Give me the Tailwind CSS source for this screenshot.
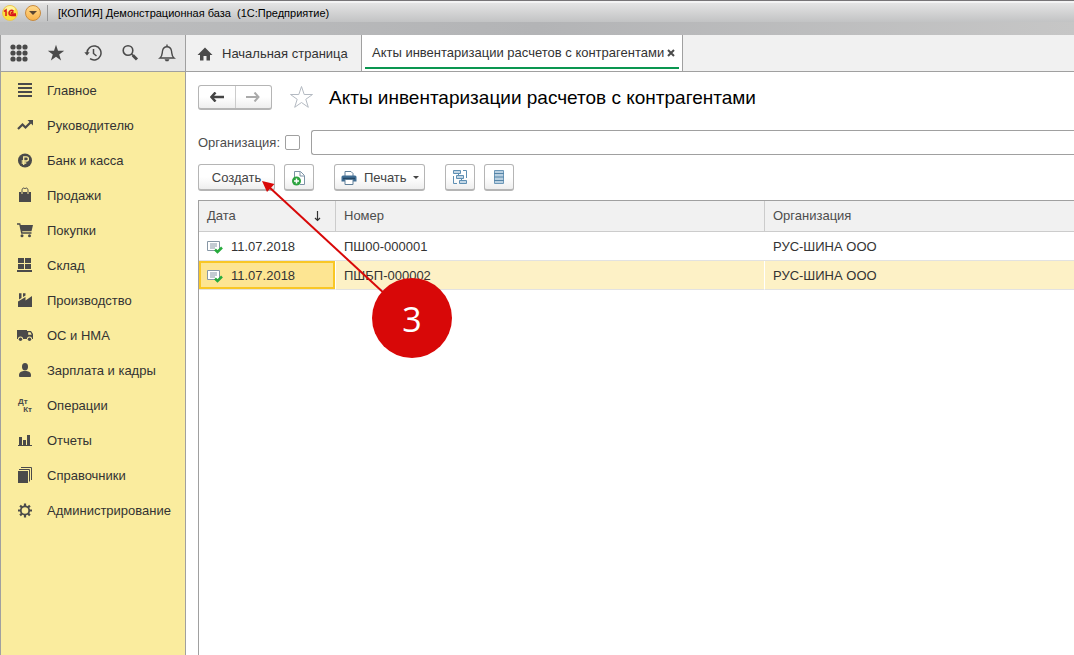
<!DOCTYPE html>
<html lang="ru">
<head>
<meta charset="utf-8">
<meta name="viewport" content="width=device-width, initial-scale=1">
<title>Акты инвентаризации расчетов с контрагентами</title>
<script src="https://cdn.jsdelivr.net/npm/@tailwindcss/browser@4"></script>
</head>
<body class="relative flex min-h-screen flex-col overflow-x-hidden bg-white font-['Liberation_Sans',Arial,sans-serif] text-[13px] leading-4 text-[#333333]">

<!-- Window title bar -->
<header class="flex h-[35px] flex-col border-t border-[#777577] bg-linear-to-r from-[#bdbebf] via-[#b3b4b6] to-[#c6c6c6]">
  <div class="flex h-[21px] items-center border-t-2 border-[#f4f4f4] bg-linear-to-b from-[#e4e4e4] to-[#c2c3c4] pl-[2px]">
    <svg class="size-4 overflow-visible" viewBox="0 0 16 16" aria-label="1С">
      <circle cx="8" cy="8" r="7.5" fill="#fde23c" stroke="#e9c65a"/>
      <ellipse cx="8" cy="4" rx="5" ry="3" fill="#fff3a0"/>
      <path d="M2 6.5 4 5V11M11.5 6.2C10 4.600 7 5.200 7 8C7 10 8.500 10.500 10 10.500H14M11.500 7.500C10.500 6.800 9.200 7.300 9.200 8.300 9.200 8.900 9.700 9 10.300 9H14" fill="none" stroke="#d8171b" stroke-width="1.500"/>
    </svg>
    <button type="button" aria-label="Меню" class="ml-[7px] flex size-4 items-center justify-center rounded-full border border-[#c98a3c] bg-linear-to-b from-[#ffd98a] to-[#f9b248]">
      <svg class="h-1 w-2" viewBox="0 0 8 4"><path d="M0 0H8L4 4Z" fill="#5a4632"/></svg>
    </button>
    <span class="ml-[6px] h-4 w-px bg-[#969798]"></span>
    <span class="ml-[10px] whitespace-pre text-[11px] text-black">[КОПИЯ] Демонстрационная база  (1С:Предприятие)</span>
  </div>
</header>

<div class="flex flex-1 border-l border-[#a0a0a0]">
  <!-- Section panel -->
  <aside class="flex w-[185px] shrink-0 flex-col border-r border-[#a0a0a0] bg-[#faec9e]">
    <div class="grid h-[37px] grid-cols-5 border-b border-[#a0a0a0] bg-[#e6e6e6] text-[#4a4a4a]">
      <button type="button" aria-label="Разделы" class="flex items-center justify-center">
        <svg class="size-[18px]" viewBox="0 0 18 18" fill="currentColor"><circle cx="3" cy="3" r="2.600"/><circle cx="9" cy="3" r="2.600"/><circle cx="15" cy="3" r="2.600"/><circle cx="3" cy="9" r="2.600"/><circle cx="9" cy="9" r="2.600"/><circle cx="15" cy="9" r="2.600"/><circle cx="3" cy="15" r="2.600"/><circle cx="9" cy="15" r="2.600"/><circle cx="15" cy="15" r="2.600"/></svg>
      </button>
      <button type="button" aria-label="Избранное" class="flex items-center justify-center">
        <svg class="size-[18px]" viewBox="0 0 18 18" fill="currentColor"><path d="M9 .8 11 6.700H17.200L12.200 10.400 14.100 16.500 9 12.800 3.900 16.500 5.800 10.400.8 6.700H7Z"/></svg>
      </button>
      <button type="button" aria-label="История" class="flex items-center justify-center">
        <svg class="size-[18px]" viewBox="0 0 18 18" fill="none" stroke="currentColor" stroke-width="1.500"><path d="M3 9A7 7 0 1 1 6 14.700"/><path d="M9.500 5V9.500L12.500 12"/><path d="M.3 8.300H5.700L3 11.500Z" fill="currentColor" stroke="none"/></svg>
      </button>
      <button type="button" aria-label="Поиск" class="flex items-center justify-center">
        <svg class="size-[18px]" viewBox="0 0 18 18" fill="none" stroke="currentColor"><circle cx="7" cy="6.500" r="4.800" stroke-width="1.600"/><path d="M10.500 10 12 11.500" stroke-width="1.600"/><path d="M11.800 11.300 16 15.500" stroke-width="3"/></svg>
      </button>
      <button type="button" aria-label="Уведомления" class="flex items-center justify-center">
        <svg class="size-[18px]" viewBox="0 0 18 18" fill="none" stroke="currentColor" stroke-width="1.400"><path d="M2 14C4.500 12 4 10 4.500 7 5 3.800 6.500 2.700 9 2.700S13 3.800 13.500 7C14 10 13.500 12 16 14Z"/><path d="M9 .5V2.700"/><path d="M6.500 15.300H11.500L10.300 17.300H7.700Z" fill="currentColor" stroke="none"/></svg>
      </button>
    </div>
    <nav aria-label="Разделы" class="flex flex-col pt-px text-[#333333]">
      <a href="#" class="flex h-[35px] items-center gap-[13px] pl-[15px]"><svg class="size-[18px] text-[#4a4a4a]" viewBox="0 0 18 18" fill="currentColor"><path d="M2 1H16V3H2ZM2 5H16V7H2ZM2 9H16V11H2ZM2 13H16V15H2Z"/></svg>Главное</a>
      <a href="#" class="flex h-[35px] items-center gap-[13px] pl-[15px]"><svg class="size-[18px] text-[#4a4a4a]" viewBox="0 0 18 18" fill="currentColor"><path d="M2 12 6.500 7.500 9.500 10.500 14.500 5.500" fill="none" stroke="currentColor" stroke-width="2.200"/><path d="M11.500 3H17V8.500Z"/></svg>Руководителю</a>
      <a href="#" class="flex h-[35px] items-center gap-[13px] pl-[15px]"><svg class="size-[18px] text-[#4a4a4a]" viewBox="0 0 18 18" fill="currentColor"><circle cx="9" cy="8.500" r="7"/><path d="M7.700 13V4.800H10.300A2.100 2.100 0 0 1 10.300 9H5.700M5.700 11H10.300" fill="none" stroke="#faec9e" stroke-width="1.300"/></svg>Банк и касса</a>
      <a href="#" class="flex h-[35px] items-center gap-[13px] pl-[15px]"><svg class="size-[18px] text-[#4a4a4a]" viewBox="0 0 18 18" fill="currentColor"><path d="M3 5H15V15H3Z"/><path d="M6 7V3.500C6 .3 8.500 .5 9 2 9.500 .5 12 .3 12 3.500V7" fill="none" stroke="#faec9e" stroke-width="2"/><path d="M6 7V3.500C6 .5 8.500 .5 9 2 9.500 .5 12 .5 12 3.500V7" fill="none" stroke="currentColor" stroke-width="1"/></svg>Продажи</a>
      <a href="#" class="flex h-[35px] items-center gap-[13px] pl-[15px]"><svg class="size-[18px] text-[#4a4a4a]" viewBox="0 0 18 18" fill="currentColor"><path d="M1 1.300H4.300L4.700 3H17L15.500 9.300H6.200L6.400 10.300H15.500V11.700H5.200L3.300 2.700H1Z"/><circle cx="6" cy="13.700" r="1.500"/><circle cx="13.500" cy="13.700" r="1.500"/></svg>Покупки</a>
      <a href="#" class="flex h-[35px] items-center gap-[13px] pl-[15px]"><svg class="size-[18px] text-[#4a4a4a]" viewBox="0 0 18 18" fill="currentColor"><path d="M2 1H8V6H2ZM9 1H15V6H9ZM2 7H8V12H2ZM9 7H15V12H9ZM1 13H16V15H1Z"/></svg>Склад</a>
      <a href="#" class="flex h-[35px] items-center gap-[13px] pl-[15px]"><svg class="size-[18px] text-[#4a4a4a]" viewBox="0 0 18 18" fill="currentColor"><path d="M2 15V9.500L9.500 5V8.500L16 4V15Z"/><path d="M3 1.300H5.500V6L3 7.500ZM7 1.300H9.500V3.500L7 5Z"/></svg>Производство</a>
      <a href="#" class="flex h-[35px] items-center gap-[13px] pl-[15px]"><svg class="size-[18px] text-[#4a4a4a]" viewBox="0 0 18 18" fill="currentColor"><path d="M1 3H11V4H15L17 7V12H1Z"/><path d="M12.200 5.300H14.400L15.700 7.700H12.200Z" fill="#faec9e"/><circle cx="4.500" cy="12" r="2.600" fill="#faec9e"/><circle cx="13.500" cy="12" r="2.600" fill="#faec9e"/><circle cx="4.500" cy="12.200" r="1.700"/><circle cx="13.500" cy="12.200" r="1.700"/></svg>ОС и НМА</a>
      <a href="#" class="flex h-[35px] items-center gap-[13px] pl-[15px]"><svg class="size-[18px] text-[#4a4a4a]" viewBox="0 0 18 18" fill="currentColor"><ellipse cx="9" cy="4.700" rx="3" ry="3.700"/><path d="M3 13.500C3 10 5 9.500 7.500 9H10.500C13 9.500 15 10 15 13.500 15 14.500 14.500 15 14 15H4C3.500 15 3 14.500 3 13.500Z"/></svg>Зарплата и кадры</a>
      <a href="#" class="flex h-[35px] items-center gap-[13px] pl-[15px]"><span class="flex size-[18px] flex-col justify-center px-[2px] text-[8px] leading-2 font-bold text-[#4a4a4a]"><span>Дт</span><span class="self-end">Кт</span></span>Операции</a>
      <a href="#" class="flex h-[35px] items-center gap-[13px] pl-[15px]"><svg class="size-[18px] text-[#4a4a4a]" viewBox="0 0 18 18" fill="currentColor"><path d="M3 5H6V13H3ZM7 8H10V13H7ZM11 3H14V13H11ZM2 13H16V14H2Z"/></svg>Отчеты</a>
      <a href="#" class="flex h-[35px] items-center gap-[13px] pl-[15px]"><svg class="size-[18px] text-[#4a4a4a]" viewBox="0 0 18 18" fill="currentColor"><path d="M2 4H12V16H2Z"/><path d="M3 2.500H13.500V14.500M5 .5H15.500V13" fill="none" stroke="currentColor"/></svg>Справочники</a>
      <a href="#" class="flex h-[35px] items-center gap-[13px] pl-[15px]"><svg class="size-[18px] text-[#4a4a4a]" viewBox="0 0 18 18" fill="none" stroke="currentColor"><circle cx="9" cy="8.500" r="4.200" stroke-width="1.800"/><path d="M9 1.500V4.500M9 12.500V15.500M2 8.500H5M13 8.500H16M4.100 3.600 6 5.500M12 11.500 13.900 13.400M13.900 3.600 12 5.500M6 11.500 4.100 13.400" stroke-width="2.200"/></svg>Администрирование</a>
    </nav>
  </aside>

  <div class="flex min-w-0 flex-1 flex-col">
    <!-- Open pages -->
    <div class="flex h-[37px] border-b border-[#a0a0a0] bg-[#f1f1f1]">
      <a href="#" class="flex w-[175px] items-center gap-[9px] pt-[2px] pl-[11px]">
        <svg class="h-[14px] w-4 text-[#4a4a4a]" viewBox="0 0 16 14" fill="currentColor"><path d="M8 .5 15.500 8H13V13.500H9.500V9H6.500V13.500H3V8H.5Z"/></svg>
        Начальная страница
      </a>
      <div class="flex w-[322px] flex-col border-x border-[#a0a0a0] bg-white px-[3px] pb-[2px]">
        <div class="flex flex-1 items-center justify-between border-b-2 border-[#0a9650] pt-1 pr-1 pl-[7px]">
          <a href="#" class="whitespace-nowrap">Акты инвентаризации расчетов с контрагентами</a>
          <button type="button" aria-label="Закрыть"><svg class="size-2" viewBox="0 0 8 8"><path d="M1 1 7 7M7 1 1 7" stroke="#4a4a4a" stroke-width="2"/></svg></button>
        </div>
      </div>
    </div>

    <main class="flex flex-1 flex-col pl-3">
      <div class="flex items-center pt-3">
        <div class="flex h-[25px] w-[74px] rounded-[3px] border border-b-2 border-[#b5b5b5] bg-linear-to-b from-white from-50% to-[#eeeeee]">
          <button type="button" aria-label="Назад" class="flex flex-1 items-center justify-center border-r border-[#cccccc]"><svg class="h-[10px] w-[14px]" viewBox="0 0 14 10"><path d="M14 5H3" stroke="#444444" stroke-width="2.500"/><path d="M5.500 .5 1.500 5 5.500 9.500" fill="none" stroke="#444444" stroke-width="2.500"/></svg></button>
          <button type="button" aria-label="Вперед" class="flex flex-1 items-center justify-center"><svg class="h-[10px] w-[14px]" viewBox="0 0 14 10"><path d="M0 5H11M8.500 .5 12.500 5 8.500 9.500" fill="none" stroke="#aaaaaa" stroke-width="2"/></svg></button>
        </div>
        <button type="button" aria-label="В избранное" class="ml-[17px]"><svg class="size-6" viewBox="0 0 24 24"><path d="M12.500 1.500 15.200 9.500H23.500L16.800 14.300 19.300 22.300 12.500 17.500 5.700 22.300 8.200 14.300 1.500 9.500H9.800Z" fill="#fff" stroke="#b4bac2"/></svg></button>
        <h1 class="ml-4 pt-[2px] text-[19px] leading-6 whitespace-nowrap text-black">Акты инвентаризации расчетов с контрагентами</h1>
      </div>

      <div class="flex items-center pt-5">
        <label for="org-on" class="w-[87px] text-[#4d4d4d]">Организация:</label>
        <input id="org-on" type="checkbox" class="size-[15px] appearance-none rounded-[2px] border border-[#a0a0a0] bg-white">
        <input type="text" aria-label="Организация" class="ml-[11px] h-[25px] min-w-0 flex-1 rounded-l-[3px] border border-r-0 border-[#a0a0a0] bg-white px-2">
      </div>

      <div class="flex pt-[9px] text-[#444444]">
        <button type="button" class="h-[27px] w-[77px] rounded-[3px] border border-b-2 border-[#b5b5b5] bg-linear-to-b from-white from-50% to-[#eeeeee] pt-px">Создать</button>
        <button type="button" aria-label="Скопировать" class="ml-[9px] flex h-[27px] w-[30px] items-center justify-center rounded-[3px] border border-b-2 border-[#b5b5b5] bg-linear-to-b from-white from-50% to-[#eeeeee] pt-px">
          <svg class="size-4" viewBox="0 0 16 16"><path d="M3.500 8V1.500H9.500L13.500 5.500V14.500H9" fill="#fff" stroke="#7c93a6"/><path d="M9 2V6H13" fill="none" stroke="#7c93a6"/><circle cx="5.500" cy="11" r="4.500" fill="#2ca33f"/><path d="M5.500 8.500V13.500M3 11H8" stroke="#fff" stroke-width="1.500"/></svg>
        </button>
        <button type="button" class="ml-[20px] flex h-[27px] w-[91px] items-center rounded-[3px] border border-b-2 border-[#b5b5b5] bg-linear-to-b from-white from-50% to-[#eeeeee] pt-px pl-[6px]">
          <svg class="h-[14px] w-4" viewBox="0 0 16 14"><path d="M4 5V.5H10L12 2.500V5" fill="#fff" stroke="#5f7f99"/><path d="M2 4.500H14A1.500 1.500 0 0 1 15.500 6V10.500H.5V6A1.500 1.500 0 0 1 2 4.500Z" fill="#3f6d93"/><path d="M2 7.500H14" stroke="#234766" stroke-width="1.500"/><path d="M4 8.500H12V13.500H4Z" fill="#fff" stroke="#5f7f99"/></svg>
          <span class="ml-[7px]">Печать</span>
          <svg class="ml-[6px] h-[3px] w-[6px]" viewBox="0 0 6 3"><path d="M0 0H6L3 3Z" fill="#444"/></svg>
        </button>
        <button type="button" aria-label="Структура подчиненности" class="ml-5 flex h-[27px] w-[30px] items-center justify-center rounded-[3px] border border-b-2 border-[#b5b5b5] bg-linear-to-b from-white from-50% to-[#eeeeee]">
          <svg class="size-4" viewBox="0 0 16 16" fill="none" stroke="#5e8fb3"><path d="M1.500 1.500H8.500V4.500H1.500ZM4.500 6.500H11.500V9.500H4.500ZM7.500 11.500H14.500V14.500H7.500Z" fill="#c3d7e6"/><path d="M11 1.500H14.500V9M1.500 7V14.500H5M6.500 4.500V6.500M9.500 9.500V11.500"/></svg>
        </button>
        <button type="button" aria-label="Реестр документов" class="ml-[9px] flex h-[27px] w-[30px] items-center justify-center rounded-[3px] border border-b-2 border-[#b5b5b5] bg-linear-to-b from-white from-50% to-[#eeeeee]">
          <svg class="size-4" viewBox="0 0 16 16"><path d="M3.500 1.500H12.500V14.500H3.500Z" fill="#b9d0e1" stroke="#6d98b8"/><path d="M3 4.500H13M3 8H13M3 11.500H13" stroke="#5585a8"/></svg>
        </button>
      </div>

      <div class="mt-[9px] flex-1 border-t border-l border-[#a0a0a0]">
        <table class="w-full table-fixed border-separate border-spacing-0 text-left">
          <colgroup><col class="w-[137px]"><col class="w-[429px]"><col></colgroup>
          <thead class="text-[#4d4d4d]">
            <tr class="h-[31px]">
              <th scope="col" class="border-r border-b border-[#cccccc] bg-[#f1f1f1] px-2 py-0 font-normal">
                <span class="flex items-center justify-between pr-[5px]">Дата
                  <svg class="h-3 w-[9px]" viewBox="0 0 9 12"><path d="M4.500 1V10M2 8 4.500 10.500 7 8" fill="none" stroke="#333" stroke-width="1.200"/></svg>
                </span>
              </th>
              <th scope="col" class="border-r border-b border-[#cccccc] bg-[#f1f1f1] px-2 py-0 font-normal">Номер</th>
              <th scope="col" class="border-b border-[#cccccc] bg-[#f1f1f1] px-2 py-0 font-normal">Организация</th>
            </tr>
          </thead>
          <tbody>
            <tr class="h-[29px]">
              <td class="border-b border-[#e2e2e2] p-0">
                <span class="flex h-7 items-center gap-2 pt-px pl-2"><svg class="size-4" viewBox="0 0 16 16"><path d="M.5 2.500H12.500V11.500H.5Z" fill="#fff" stroke="#8797a5"/><path d="M3 5H10M3 7H10M3 9H8" stroke="#8797a5"/><path d="M8 10.500 10.500 13 15 8.500" fill="none" stroke="#27ab3d" stroke-width="2.500"/></svg>11.07.2018</span>
              </td>
              <td class="border-b border-[#e2e2e2] px-2 pt-[2px] pb-0">ПШ00-000001</td>
              <td class="border-b border-[#e2e2e2] px-2 pt-[2px] pb-0">РУС-ШИНА ООО</td>
            </tr>
            <tr class="h-[29px]">
              <td class="border-r border-b border-r-white border-b-[#e2e2e2] p-0">
                <span class="flex h-7 items-center gap-2 border-2 border-[#f9c725] bg-[#fde592] pt-px pl-[6px]"><svg class="size-4" viewBox="0 0 16 16"><path d="M.5 2.500H12.500V11.500H.5Z" fill="#fff" stroke="#8797a5"/><path d="M3 5H10M3 7H10M3 9H8" stroke="#8797a5"/><path d="M8 10.500 10.500 13 15 8.500" fill="none" stroke="#27ab3d" stroke-width="2.500"/></svg>11.07.2018</span>
              </td>
              <td class="border-r border-b border-r-white border-b-[#e2e2e2] bg-[#fdf1c6] px-2 pt-[2px] pb-0">ПШБП-000002</td>
              <td class="border-b border-[#e2e2e2] bg-[#fdf1c6] px-2 pt-[2px] pb-0">РУС-ШИНА ООО</td>
            </tr>
          </tbody>
        </table>
      </div>
    </main>
  </div>
</div>

<!-- Step callout pointing at the create button -->
<div class="pointer-events-none absolute top-[180px] left-[262px] h-[178px] w-[190px]">
  <svg class="absolute inset-0 size-full" viewBox="0 0 190 178"><path d="M6 6 124 115" stroke="#d80808" stroke-width="2"/><path d="M0 1 12.500 4 5 12Z" fill="#d80808"/></svg>
  <div class="absolute right-0 bottom-0 flex size-20 items-center justify-center rounded-full bg-[#d80808] pt-[2px] font-['Open_Sans',sans-serif] text-[34px] leading-10 font-medium text-white">3</div>
</div>
</body>
</html>
